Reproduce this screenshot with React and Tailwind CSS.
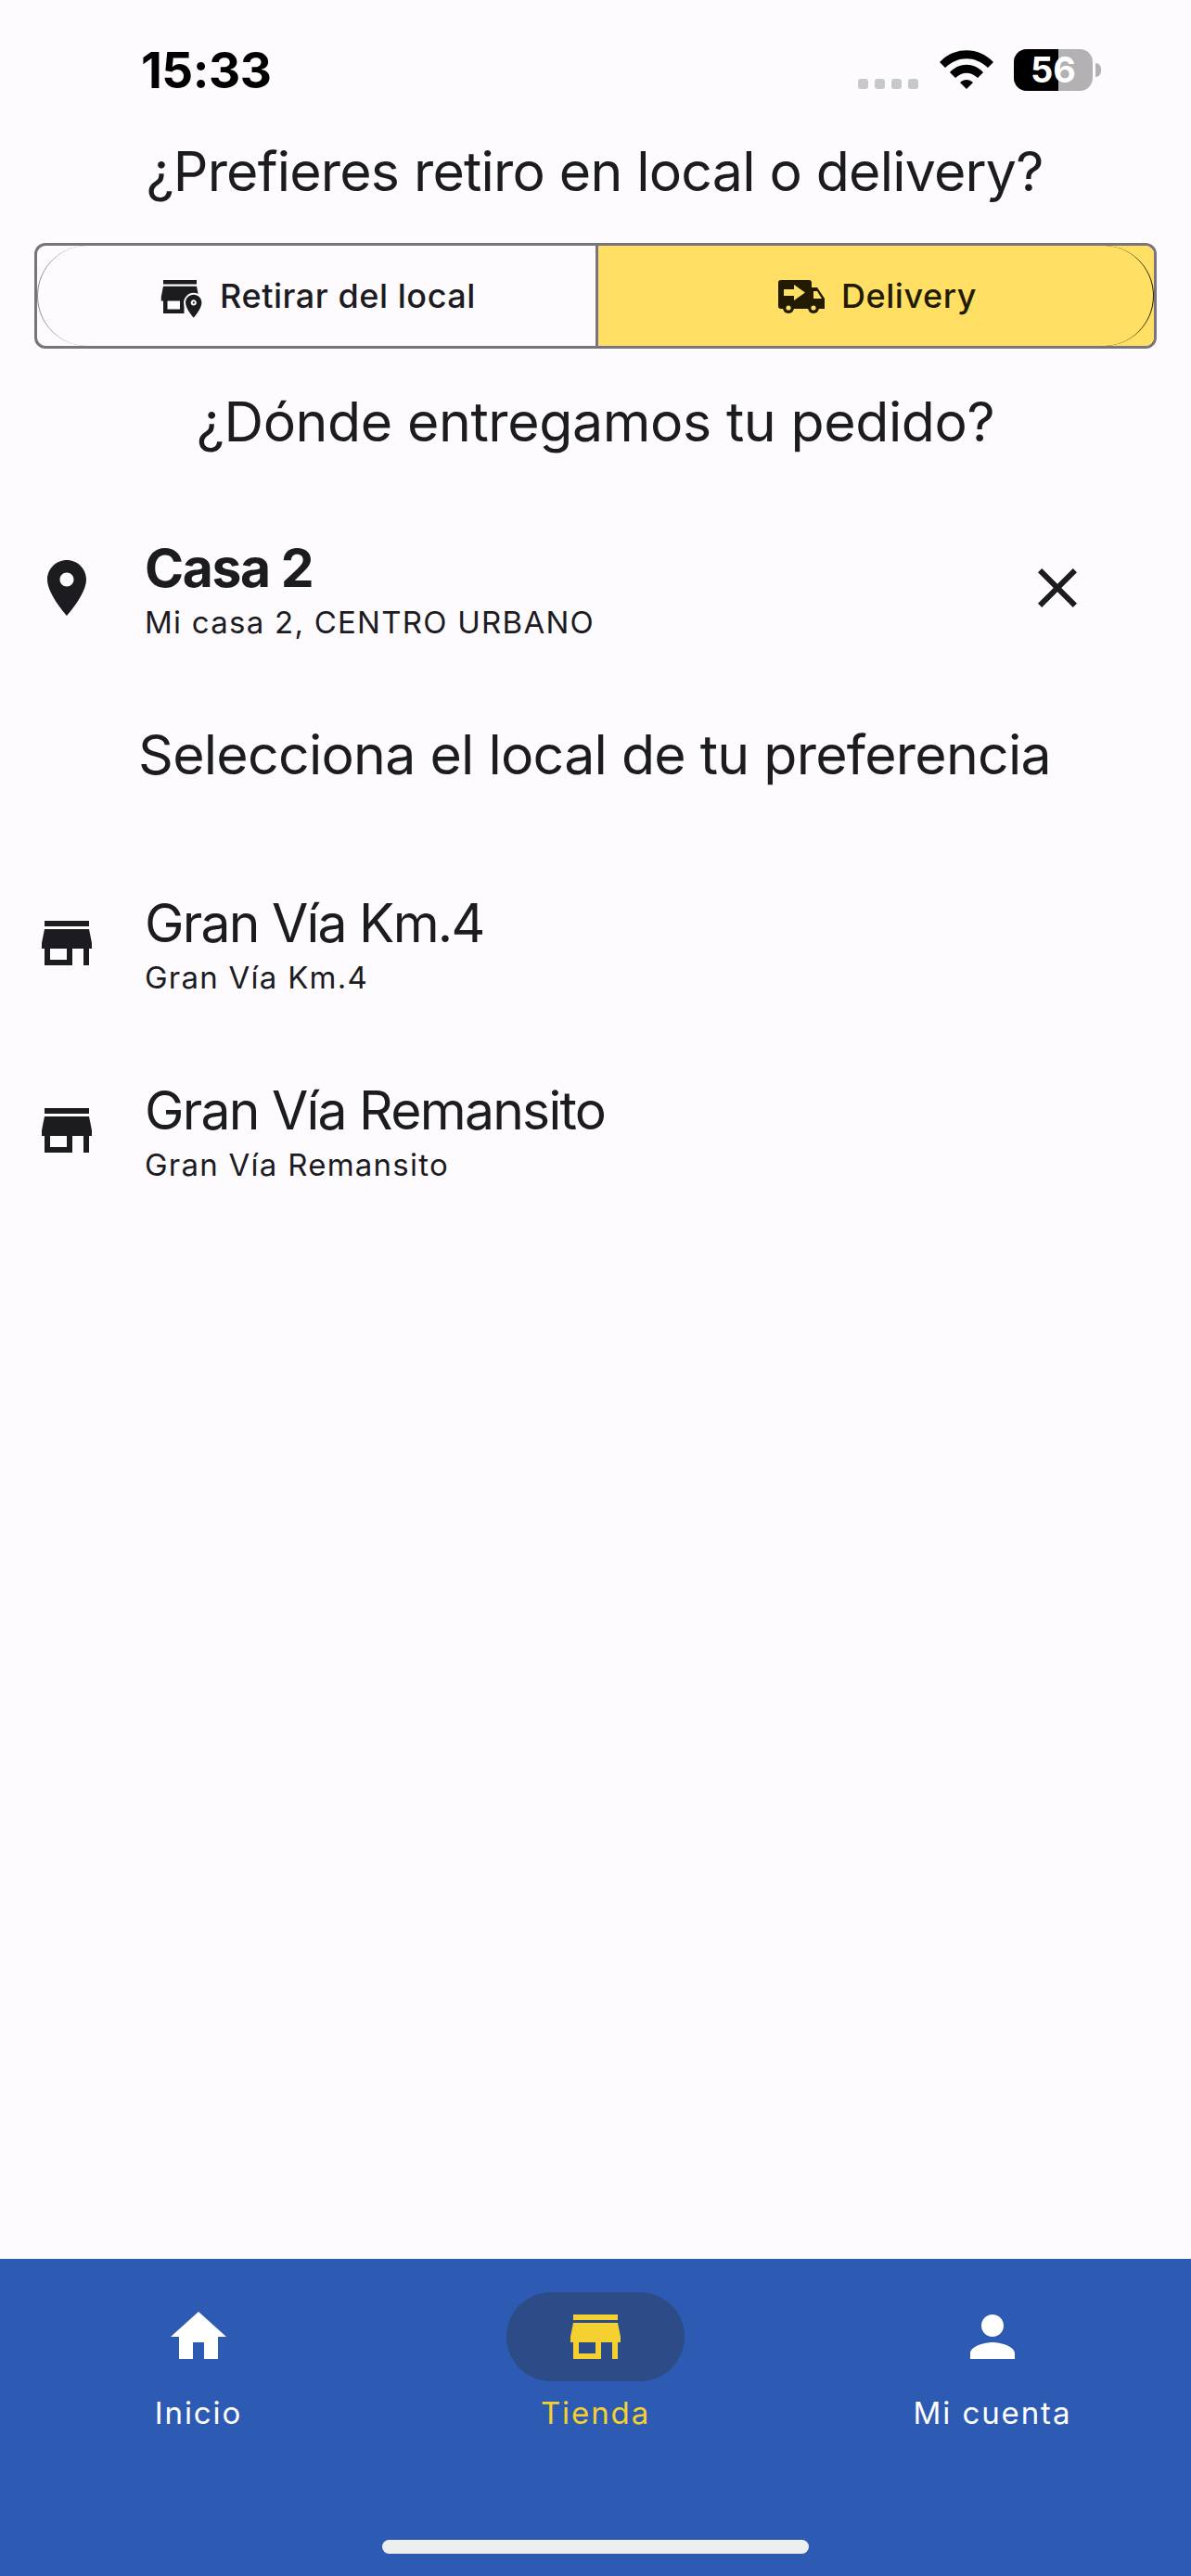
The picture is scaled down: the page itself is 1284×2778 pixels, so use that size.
const storePath = "M20 4H4v2h16V4zm1 10v-2l-1-5H4l-1 5v2h1v6h10v-6h4v6h2v-6h1zm-9 4H6v-4h6v4z";
const placePath = "M12 2C8.13 2 5 5.13 5 9c0 5.25 7 13 7 13s7-7.75 7-13c0-3.87-3.13-7-7-7zm0 9.5c-1.38 0-2.5-1.12-2.5-2.5s1.12-2.5 2.5-2.5 2.5 1.12 2.5 2.5-1.12 2.5-2.5 2.5z";

function MaterialIcon({ d, className }) {
  return (
    <svg viewBox="0 0 24 24" fill="currentColor" className={className}>
      <path d={d} />
    </svg>
  );
}

function StatusBar() {
  return (
    <div className="h-[134px] flex items-start justify-between pl-[152px] pr-[97px] pt-[46px]">
      <span className="text-[53px] leading-[60px] font-bold tracking-[-0.5px] text-black">15:33</span>
      <div className="flex items-start pt-[7px]">
        <div className="flex gap-[7px] mt-[32px]">
          <span className="w-[11px] h-[11px] rounded-[3px] bg-[#c8c7c9]"></span>
          <span className="w-[11px] h-[11px] rounded-[3px] bg-[#c8c7c9]"></span>
          <span className="w-[11px] h-[11px] rounded-[3px] bg-[#c8c7c9]"></span>
          <span className="w-[11px] h-[11px] rounded-[3px] bg-[#c8c7c9]"></span>
        </div>
        <svg viewBox="0 0 58 42" fill="#000" className="w-[58px] h-[42px] ml-[23px] mt-[1px]">
          <path d="M0 13C16 -4 42 -4 58 13L52 19C38 6 20 6 6 19Z" />
          <path d="M11 24C21 13 37 13 47 24L41 30C33 23 25 23 17 30Z" />
          <path d="M22 35C26 31 32 31 36 35L29 42Z" />
        </svg>
        <div className="relative w-[85px] h-[45px] ml-[22px] rounded-[14px] overflow-hidden bg-[#b3b1b3] flex items-center justify-center">
          <div className="absolute left-0 top-0 bottom-0 w-[48px] bg-black"></div>
          <span className="relative text-[38px] leading-[45px] font-bold text-white">56</span>
        </div>
        <div className="w-[6px] h-[15px] ml-[3px] mt-[15px] rounded-r-full bg-[#b3b1b3]"></div>
      </div>
    </div>
  );
}

function Heading({ children, className }) {
  return <h2 className={`text-center text-[59px] leading-[72px] font-normal text-[#1c1b1f] ${className}`}>{children}</h2>;
}

function SegmentedToggle() {
  return (
    <div className="mx-[37px] mt-[41px] h-[114px] flex border-[3px] border-[#79747e] rounded-[12px] overflow-hidden">
      <div className="relative w-[605px] flex items-center justify-center gap-[16px] border-r-[3px] border-[#79747e] pl-[4px]">
        <div className="absolute left-0 inset-y-0 w-[60px] rounded-l-[54px] border-l border-[#8d8b90]"></div>
        <svg viewBox="0 0 24 24" className="w-[54px] h-[54px] text-[#1c1b1f] ml-[-6px] mt-[2px]" fill="currentColor">
          <path d={storePath} />
          <g transform="translate(11.95 9.9) scale(0.55)">
            <path d={placePath} stroke="#fefbff" strokeWidth="3.2" fill="#fefbff" />
            <path d={placePath} />
          </g>
        </svg>
        <span className="text-[36px] leading-[48px] font-medium tracking-[0.55px] text-[#1c1b1f]">Retirar del local</span>
      </div>
      <div className="relative flex-1 bg-[#ffe064] flex items-center justify-center gap-[18px] pl-[3px]">
        <div className="absolute right-0 inset-y-0 w-[60px] rounded-r-[54px] border-r border-[#221b00]"></div>
        <svg viewBox="0 0 50 36" className="w-[50px] h-[36px] mt-[2px]">
          <rect x="0" y="0" width="36" height="31" rx="3" fill="#221b00" />
          <path d="M36 8H42L50 20V31H36Z" fill="#221b00" />
          <path d="M38 12H42L47 20H38Z" fill="#ffe064" />
          <path d="M6 10H17V5L29 13.5L17 22V17H6Z" fill="#ffe064" />
          <circle cx="11" cy="30" r="6" fill="#221b00" />
          <circle cx="11" cy="30" r="2.6" fill="#ffe064" />
          <circle cx="38" cy="30" r="6" fill="#221b00" />
          <circle cx="38" cy="30" r="2.6" fill="#ffe064" />
        </svg>
        <span className="text-[36px] leading-[48px] font-medium tracking-[0.55px] text-[#221b00]">Delivery</span>
      </div>
    </div>
  );
}

function ListRow({ icon, title, subtitle, bold, className, trailing }) {
  return (
    <div className={`flex items-center pl-[36px] pr-[108px] ${className}`}>
      <MaterialIcon d={icon} className="w-[72px] h-[72px] mb-[3px] text-[#1c1b1f] shrink-0" />
      <div className="ml-[48px] flex-1">
        <div className={`text-[57px] leading-[66px] text-[#1c1b1f] ${bold ? "font-bold tracking-[-1.4px]" : "font-normal tracking-[-1.75px]"}`}>{title}</div>
        <div className="mt-[6px] text-[33px] leading-[38px] tracking-[1.25px] text-[#1c1b1f]">{subtitle}</div>
      </div>
      {trailing}
    </div>
  );
}

function NavItem({ icon, label, active }) {
  return (
    <div className="flex flex-col items-center">
      <div className={`w-[192px] h-[96px] rounded-full flex items-center justify-center ${active ? "bg-[#2d4c87] text-[#f4d130]" : "text-white"}`}>
        <MaterialIcon d={icon} className="w-[72px] h-[72px]" />
      </div>
      <span className={`mt-[12px] text-[33px] leading-[44px] font-normal tracking-[1.9px] ${active ? "text-[#f4d130]" : "text-white"}`}>{label}</span>
    </div>
  );
}

export default function App() {
  return (
    <div className="w-[1284px] h-[2778px] bg-[#fefbff] flex flex-col font-['Inter',sans-serif]">
      <StatusBar />
      <Heading className="mt-[15px] pr-[2px] tracking-[-0.8px]">¿Prefieres retiro en local o delivery?</Heading>
      <SegmentedToggle />
      <Heading className="mt-[43px] tracking-[-0.4px]">¿Dónde entregamos tu pedido?</Heading>
      <ListRow
        className="mt-[89px]"
        icon={placePath}
        title="Casa 2"
        subtitle="Mi casa 2, CENTRO URBANO"
        bold
        trailing={
          <MaterialIcon
            d="M19 6.41L17.59 5 12 10.59 6.41 5 5 6.41 10.59 12 5 17.59 6.41 19 12 13.41 17.59 19 19 17.59 13.41 12z"
            className="w-[72px] h-[72px] mb-[3px] text-[#1c1b1f] shrink-0"
          />
        }
      />
      <Heading className="mt-[88px] pr-[2px] tracking-[-0.75px]">Selecciona el local de tu preferencia</Heading>
      <ListRow className="mt-[113px]" icon={storePath} title="Gran Vía Km.4" subtitle="Gran Vía Km.4" />
      <ListRow className="mt-[92px]" icon={storePath} title="Gran Vía Remansito" subtitle="Gran Vía Remansito" />

      <div className="mt-auto h-[342px] bg-[#2d5bb3] flex flex-col">
        <div className="grid grid-cols-3 pt-[36px]">
          <NavItem label="Inicio" icon="M10 20v-6h4v6h5v-8h3L12 3 2 12h3v8z" />
          <NavItem label="Tienda" icon={storePath} active />
          <NavItem
            label="Mi cuenta"
            icon="M12 12c2.21 0 4-1.79 4-4s-1.79-4-4-4-4 1.79-4 4 1.79 4 4 4zm0 2c-2.67 0-8 1.34-8 4v2h16v-2c0-2.66-5.33-4-8-4z"
          />
        </div>
        <div className="mt-auto mb-[24px] mx-auto w-[460px] h-[15px] rounded-full bg-[#eeeeee]"></div>
      </div>
    </div>
  );
}
